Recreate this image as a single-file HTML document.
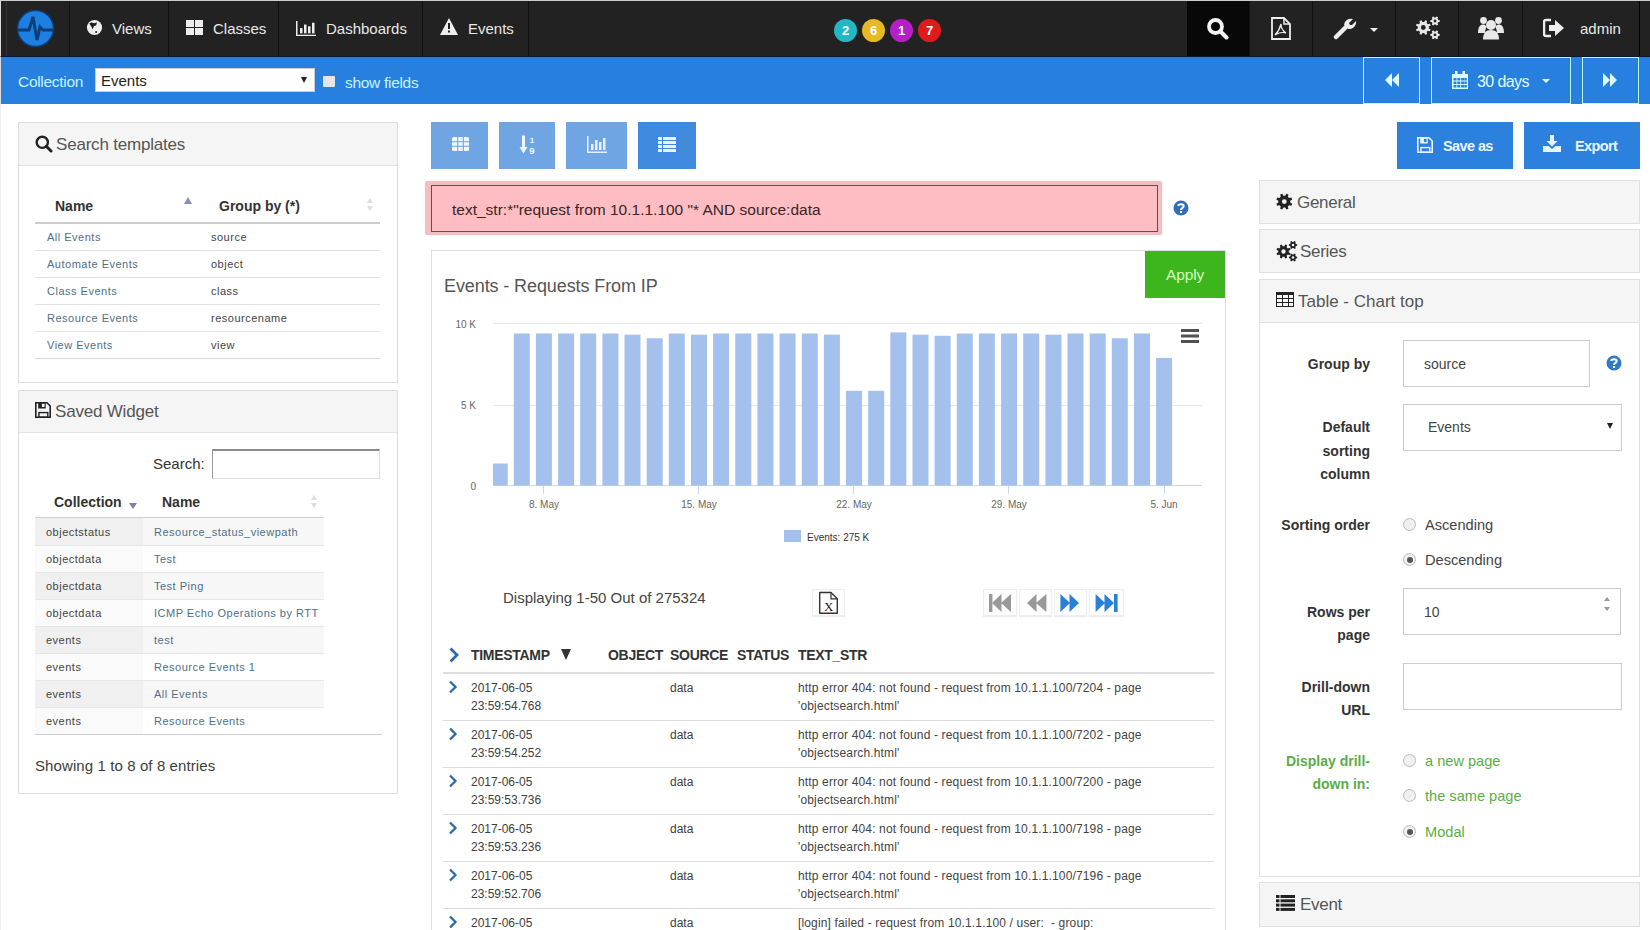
<!DOCTYPE html>
<html><head><meta charset="utf-8">
<style>
*{box-sizing:border-box;margin:0;padding:0}
html,body{width:1650px;height:930px;overflow:hidden;background:#fff;font-family:"Liberation Sans",sans-serif;color:#333;position:relative}
.a{position:absolute}
.t{position:absolute;white-space:nowrap;line-height:1}
.ttl{color:#595959}
#nav{left:0;top:0;width:1650px;height:57px;background:#222;border-top:1px solid #ccc;border-left:1px solid #ddd}
.sep{position:absolute;top:1px;width:1px;height:55px;background:#111}
.navt{color:#e8e8e8;font-size:15px}
#bar{left:0;top:56px;width:1650px;height:48px;background:#2780e0;border-left:1px solid #ddd;border-top:1px solid #061a38}
.bbtn{position:absolute;top:57px;height:47px;border:1px solid #bdf2ff;background:#2780e0}
.panel{position:absolute;border:1px solid #ddd;background:#fff}
.phead{position:absolute;left:0;top:0;right:0;background:#f5f5f5;border-bottom:1px solid #ddd}
.sm{font-size:11px;letter-spacing:0.5px;color:#444;margin-top:1px}
.lnk{color:#4f7088}
</style></head><body>
<div class="a" style="left:0;top:0;width:1px;height:930px;background:#f0f0f0"></div>
<!-- NAVBAR -->
<div id="nav" class="a"></div>
<div class="sep" style="left:6px;background:#333"></div>
<div class="sep" style="left:69px"></div>
<div class="sep" style="left:168px"></div>
<div class="sep" style="left:278px"></div>
<div class="sep" style="left:422px"></div>
<div class="sep" style="left:528px"></div>
<div class="a" style="left:1187px;top:1px;width:62px;height:55px;background:#080808"></div>
<div class="sep" style="left:1249px"></div>
<div class="sep" style="left:1312px"></div>
<div class="sep" style="left:1395px"></div>
<div class="sep" style="left:1458px"></div>
<div class="sep" style="left:1522px"></div>
<div class="sep" style="left:1639px;background:#000"></div>
<!-- logo -->
<svg class="a" style="left:16px;top:9px" width="40" height="40" viewBox="0 0 40 40">
<circle cx="19.5" cy="19.5" r="18" fill="#1d7fe0" stroke="#0b3f7a" stroke-width="1.5"/>
<path d="M2 21 H13 L17 8 L21 31 L24 18 L27 21 H37" fill="none" stroke="#0d3d78" stroke-width="3" stroke-linejoin="miter"/>
</svg>
<!-- globe -->
<svg class="a" style="left:86px;top:19px" width="17" height="17" viewBox="0 0 17 17">
<circle cx="8.5" cy="8.5" r="7.6" fill="#eee"/>
<path d="M3.3 4.6 L5.5 3.4 L8 4.3 L11 3.6 L10.2 6.2 L7.8 7.2 L6.6 10.4 L5.6 8 Z" fill="#1a1a1a"/><circle cx="10.1" cy="13" r="1" fill="#1a1a1a"/></svg>
<div class="t navt" style="left:112px;top:20.8px">Views</div>
<svg class="a" style="left:186px;top:20px" width="17" height="15" viewBox="0 0 17 15">
<rect x="0" y="0" width="8" height="7" fill="#eee"/><rect x="9" y="0" width="8" height="7" fill="#eee"/>
<rect x="0" y="8" width="8" height="7" fill="#eee"/><rect x="9" y="8" width="8" height="7" fill="#eee"/>
</svg>
<div class="t navt" style="left:213px;top:20.8px">Classes</div>
<svg class="a" style="left:296px;top:20.5px" width="20" height="15" viewBox="0 0 20 17" preserveAspectRatio="none">
<path d="M0 0 V17 H20 V15.5 H1.5 V0 Z" fill="#eee"/>
<rect x="4" y="8" width="2.5" height="6" fill="#eee"/><rect x="8" y="4" width="2.5" height="10" fill="#eee"/>
<rect x="12" y="6" width="2.5" height="8" fill="#eee"/><rect x="16" y="2" width="2.5" height="12" fill="#eee"/>
</svg>
<div class="t navt" style="left:326px;top:20.8px">Dashboards</div>
<svg class="a" style="left:440px;top:18px" width="18" height="17" viewBox="0 0 18 17">
<path d="M9 0 L18 17 H0 Z" fill="#eee"/><rect x="8" y="5" width="2" height="6" fill="#222"/><rect x="8" y="12.5" width="2" height="2" fill="#222"/>
</svg>
<div class="t navt" style="left:468px;top:20.8px">Events</div>
<!-- badges -->
<div class="a" style="left:834px;top:19px;width:23px;height:23px;border-radius:50%;background:#21b8c4"></div>
<div class="a" style="left:862px;top:19px;width:23px;height:23px;border-radius:50%;background:#e7b925"></div>
<div class="a" style="left:890px;top:19px;width:23px;height:23px;border-radius:50%;background:#b41fc6"></div>
<div class="a" style="left:918px;top:19px;width:23px;height:23px;border-radius:50%;background:#de1c1c"></div>
<div class="t" style="left:834px;top:24px;width:23px;text-align:center;color:#fff;font-size:13px;font-weight:bold">2</div>
<div class="t" style="left:862px;top:24px;width:23px;text-align:center;color:#fff;font-size:13px;font-weight:bold">6</div>
<div class="t" style="left:890px;top:24px;width:23px;text-align:center;color:#fff;font-size:13px;font-weight:bold">1</div>
<div class="t" style="left:918px;top:24px;width:23px;text-align:center;color:#fff;font-size:13px;font-weight:bold">7</div>
<!-- right nav icons -->
<svg class="a" style="left:1206px;top:17px" width="23" height="23" viewBox="0 0 23 23">
<circle cx="9.5" cy="9.5" r="6.5" fill="none" stroke="#f2f2f2" stroke-width="3.8"/>
<path d="M14.5 14.5 L20.5 20.5" stroke="#f2f2f2" stroke-width="4" stroke-linecap="round"/>
</svg>
<svg class="a" style="left:1271px;top:17px" width="20" height="23" viewBox="0 0 20 23">
<path d="M1 1 H13 L19 7 V22 H1 Z" fill="none" stroke="#eee" stroke-width="1.8"/>
<path d="M13 1 V7 H19" fill="none" stroke="#eee" stroke-width="1.5"/>
<path d="M10 7 C9 11 7 15 4 18 C7 16 12 15 15 16 C12 14 10 10 10 7 Z" fill="none" stroke="#eee" stroke-width="1.3"/>
</svg>
<svg class="a" style="left:1333px;top:17px" width="24" height="23" viewBox="0 0 24 23">
<path d="M3 20 L12 11" stroke="#eee" stroke-width="4.5" stroke-linecap="round"/>
<path d="M11 8 A7 7 0 0 1 20 2 L16 6 L17 8 L19 8 L23 4 A7 7 0 0 1 15 12 Z" fill="#eee"/>
</svg>
<div class="a" style="left:1370px;top:28px;width:0;height:0;border-left:4px solid transparent;border-right:4px solid transparent;border-top:4px solid #eee"></div>
<svg class="a" style="left:1415px;top:15px" width="28" height="28" viewBox="0 0 28 28"><path fill="#e8e8e8" fill-rule="evenodd" d="M13.83 13.38 L15.66 14.39 L14.84 16.37 L12.83 15.79 L11.59 17.03 L12.17 19.04 L10.19 19.86 L9.18 18.03 L7.42 18.03 L6.41 19.86 L4.43 19.04 L5.01 17.03 L3.77 15.79 L1.76 16.37 L0.94 14.39 L2.77 13.38 L2.77 11.62 L0.94 10.61 L1.76 8.63 L3.77 9.21 L5.01 7.97 L4.43 5.96 L6.41 5.14 L7.42 6.97 L9.18 6.97 L10.19 5.14 L12.17 5.96 L11.59 7.97 L12.83 9.21 L14.84 8.63 L15.66 10.61 L13.83 11.62 Z M5.90 12.50 a2.40 2.40 0 1 0 4.80 0 a2.40 2.40 0 1 0 -4.80 0 Z M23.33 4.92 L24.71 5.10 L24.71 6.90 L23.33 7.08 L22.60 8.34 L23.14 9.63 L21.58 10.53 L20.73 9.42 L19.27 9.42 L18.42 10.53 L16.86 9.63 L17.40 8.34 L16.67 7.08 L15.29 6.90 L15.29 5.10 L16.67 4.92 L17.40 3.66 L16.86 2.37 L18.42 1.47 L19.27 2.58 L20.73 2.58 L21.58 1.47 L23.14 2.37 L22.60 3.66 Z M18.60 6.00 a1.40 1.40 0 1 0 2.80 0 a1.40 1.40 0 1 0 -2.80 0 Z M23.33 18.72 L24.71 18.90 L24.71 20.70 L23.33 20.88 L22.60 22.14 L23.14 23.43 L21.58 24.33 L20.73 23.22 L19.27 23.22 L18.42 24.33 L16.86 23.43 L17.40 22.14 L16.67 20.88 L15.29 20.70 L15.29 18.90 L16.67 18.72 L17.40 17.46 L16.86 16.17 L18.42 15.27 L19.27 16.38 L20.73 16.38 L21.58 15.27 L23.14 16.17 L22.60 17.46 Z M18.60 19.80 a1.40 1.40 0 1 0 2.80 0 a1.40 1.40 0 1 0 -2.80 0 Z"/></svg>
<svg class="a" style="left:1478px;top:16px" width="26" height="24" viewBox="0 0 26 24"><g fill="#e8e8e8">
<circle cx="5.5" cy="4.5" r="3.4"/><circle cx="20.5" cy="4.5" r="3.4"/><circle cx="13" cy="9" r="5"/>
<path d="M0 17 C0 11 2 8.5 5.5 8.5 C7 8.5 8 9.5 8.5 11 C7.5 13 7 15 7 17 Z M19 17 C19 15 18.5 13 17.5 11 C18 9.5 19 8.5 20.5 8.5 C24 8.5 26 11 26 17 Z"/>
<path d="M5 23.5 C5 17 8 14 13 14 C18 14 21 17 21 23.5 Z"/></g></svg>
<svg class="a" style="left:1543px;top:18px" width="22" height="20" viewBox="0 0 22 20">
<path d="M8 2 H3 Q1 2 1 4 V16 Q1 18 3 18 H8" fill="none" stroke="#eee" stroke-width="2.5"/>
<path d="M6 7 H12 V2 L21 10 L12 18 V13 H6 Z" fill="#eee"/>
</svg>
<div class="t navt" style="left:1580px;top:20.8px">admin</div>
<!-- BLUE BAR -->
<div id="bar" class="a"></div>
<div class="t" style="left:18px;top:73.5px;color:#c4f4ff;font-size:15.5px;letter-spacing:-0.3px">Collection</div>
<div class="a" style="left:95px;top:68px;width:220px;height:24px;background:#fff;border:1px solid #ccc"></div>
<div class="t" style="left:101px;top:73px;color:#222;font-size:15px">Events</div>
<div class="a" style="left:301px;top:77px;width:0;height:0;border-left:3.5px solid transparent;border-right:3.5px solid transparent;border-top:6px solid #222"></div>
<div class="a" style="left:323px;top:76px;width:12px;height:11px;background:#e6e6e6;border-radius:1px"></div>
<div class="t" style="left:345px;top:74.5px;color:#c4f4ff;font-size:15.5px;letter-spacing:-0.3px">show fields</div>
<div class="bbtn" style="left:1363px;width:57px"></div>
<div class="bbtn" style="left:1431px;width:140px"></div>
<div class="bbtn" style="left:1582px;width:57px"></div>
<svg class="a" style="left:1384px;top:72px" width="16" height="16" viewBox="0 0 16 16"><path d="M8 1 L1 8 L8 15 Z M15 1 L8 8 L15 15 Z" fill="#dff"/></svg>
<svg class="a" style="left:1602px;top:72px" width="16" height="16" viewBox="0 0 16 16"><path d="M1 1 L8 8 L1 15 Z M8 1 L15 8 L8 15 Z" fill="#dff"/></svg>
<svg class="a" style="left:1452px;top:71px" width="16" height="18" viewBox="0 0 16 18"><path d="M0 3 H16 V18 H0 Z" fill="#dff"/><rect x="3" y="0" width="2.5" height="5" fill="#dff"/><rect x="10.5" y="0" width="2.5" height="5" fill="#dff"/>
<g fill="#2780e0"><rect x="1.5" y="7" width="3" height="2.5"/><rect x="5.3" y="7" width="3" height="2.5"/><rect x="9.1" y="7" width="3" height="2.5"/><rect x="12.3" y="7" width="2.5" height="2.5"/>
<rect x="1.5" y="10.5" width="3" height="2.5"/><rect x="5.3" y="10.5" width="3" height="2.5"/><rect x="9.1" y="10.5" width="3" height="2.5"/><rect x="12.3" y="10.5" width="2.5" height="2.5"/>
<rect x="1.5" y="14" width="3" height="2.5"/><rect x="5.3" y="14" width="3" height="2.5"/><rect x="9.1" y="14" width="3" height="2.5"/><rect x="12.3" y="14" width="2.5" height="2.5"/></g></svg>
<div class="t" style="left:1477px;top:73.5px;color:#e0fbff;font-size:16px;letter-spacing:-0.6px">30 days</div>
<div class="a" style="left:1542px;top:79px;width:0;height:0;border-left:4px solid transparent;border-right:4px solid transparent;border-top:4px solid #dff"></div>
<!-- LEFT PANEL 1 -->
<div class="panel" style="left:18px;top:122px;width:380px;height:261px"></div>
<div class="a" style="left:19px;top:123px;width:378px;height:43px;background:#f5f5f5;border-bottom:1px solid #e3e3e3"></div>
<svg class="a" style="left:35px;top:135px" width="18" height="18" viewBox="0 0 18 18">
<circle cx="7.3" cy="7.3" r="5.6" fill="none" stroke="#222" stroke-width="2.4"/><path d="M11.3 11.3 L16 16" stroke="#222" stroke-width="3" stroke-linecap="round"/></svg>
<div class="t" style="left:56px;top:136px;color:#555;font-size:17px;letter-spacing:-0.2px">Search templates</div>
<div class="t" style="left:55px;top:199px;color:#333;font-size:14px;font-weight:bold">Name</div>
<div class="a" style="left:184px;top:197px;width:0;height:0;border-left:4.5px solid transparent;border-right:4.5px solid transparent;border-bottom:7px solid #8a8fb5"></div>
<div class="t" style="left:219px;top:199px;color:#333;font-size:14px;font-weight:bold">Group by (*)</div>
<div class="a" style="left:367px;top:198px;width:0;height:0;border-left:3.5px solid transparent;border-right:3.5px solid transparent;border-bottom:5px solid #ddd"></div>
<div class="a" style="left:367px;top:206px;width:0;height:0;border-left:3.5px solid transparent;border-right:3.5px solid transparent;border-top:5px solid #ddd"></div>
<div class="a" style="left:35px;top:222px;width:345px;height:2px;background:#ccc"></div>
<div class="a" style="left:35px;top:250px;width:345px;height:1px;background:#e2e2e2"></div>
<div class="a" style="left:35px;top:277px;width:345px;height:1px;background:#e2e2e2"></div>
<div class="a" style="left:35px;top:304px;width:345px;height:1px;background:#e2e2e2"></div>
<div class="a" style="left:35px;top:331px;width:345px;height:1px;background:#e2e2e2"></div>
<div class="a" style="left:35px;top:358px;width:345px;height:1px;background:#d8d8d8"></div>
<div class="t sm lnk" style="left:47px;top:231px">All Events</div>
<div class="t sm lnk" style="left:47px;top:258px">Automate Events</div>
<div class="t sm lnk" style="left:47px;top:285px">Class Events</div>
<div class="t sm lnk" style="left:47px;top:312px">Resource Events</div>
<div class="t sm lnk" style="left:47px;top:339px">View Events</div>
<div class="t sm" style="left:211px;top:231px;">source</div>
<div class="t sm" style="left:211px;top:258px;">object</div>
<div class="t sm" style="left:211px;top:285px;">class</div>
<div class="t sm" style="left:211px;top:312px;">resourcename</div>
<div class="t sm" style="left:211px;top:339px;">view</div>
<!-- LEFT PANEL 2 -->
<div class="panel" style="left:18px;top:390px;width:380px;height:404px"></div>
<div class="a" style="left:19px;top:391px;width:378px;height:42px;background:#f5f5f5;border-bottom:1px solid #e3e3e3"></div>
<svg class="a" style="left:35px;top:402px" width="16" height="16" viewBox="0 0 16 16">
<path d="M0.8 0.8 H12 L15.2 4 V15.2 H0.8 Z" fill="none" stroke="#222" stroke-width="1.6"/>
<path d="M3.2 0.8 H10.7 V6.5 H3.2 Z M6.9 1.6 V4.9 H9.6 V1.6 Z" fill="#222" fill-rule="evenodd"/>
<rect x="3.9" y="10.6" width="8.9" height="4.6" fill="none" stroke="#222" stroke-width="1.4"/></svg>
<div class="t" style="left:55px;top:403px;color:#555;font-size:17px;letter-spacing:-0.2px">Saved Widget</div>
<div class="t" style="left:153px;top:456px;color:#333;font-size:15px">Search:</div>
<div class="a" style="left:212px;top:449px;width:168px;height:30px;border:1px solid #ddd;border-top:2px solid #8a8a8a;border-left-color:#999"></div>
<div class="t" style="left:54px;top:495px;color:#333;font-size:14px;font-weight:bold">Collection</div>
<div class="a" style="left:129px;top:503px;width:0;height:0;border-left:4px solid transparent;border-right:4px solid transparent;border-top:6px solid #7a80aa"></div>
<div class="t" style="left:162px;top:495px;color:#333;font-size:14px;font-weight:bold">Name</div>
<div class="a" style="left:311px;top:495px;width:0;height:0;border-left:3.5px solid transparent;border-right:3.5px solid transparent;border-bottom:5px solid #ddd"></div>
<div class="a" style="left:311px;top:503px;width:0;height:0;border-left:3.5px solid transparent;border-right:3.5px solid transparent;border-top:5px solid #ddd"></div>
<div class="a" style="left:35px;top:517px;width:289px;height:1px;background:#d0d0d0"></div>
<div class="a" style="left:35px;top:518px;width:289px;height:27px;background:#f7f7f7"></div>
<div class="a" style="left:35px;top:518px;width:108px;height:27px;background:#f0f0f0"></div>
<div class="a" style="left:35px;top:545px;width:108px;height:27px;background:#fafafa"></div>
<div class="a" style="left:35px;top:572px;width:289px;height:27px;background:#f7f7f7"></div>
<div class="a" style="left:35px;top:572px;width:108px;height:27px;background:#f0f0f0"></div>
<div class="a" style="left:35px;top:599px;width:108px;height:27px;background:#fafafa"></div>
<div class="a" style="left:35px;top:626px;width:289px;height:27px;background:#f7f7f7"></div>
<div class="a" style="left:35px;top:626px;width:108px;height:27px;background:#f0f0f0"></div>
<div class="a" style="left:35px;top:653px;width:108px;height:27px;background:#fafafa"></div>
<div class="a" style="left:35px;top:680px;width:289px;height:27px;background:#f7f7f7"></div>
<div class="a" style="left:35px;top:680px;width:108px;height:27px;background:#f0f0f0"></div>
<div class="a" style="left:35px;top:707px;width:108px;height:27px;background:#fafafa"></div>
<div class="a" style="left:35px;top:545px;width:289px;height:1px;background:#e6e6e6"></div>
<div class="a" style="left:35px;top:572px;width:289px;height:1px;background:#e6e6e6"></div>
<div class="a" style="left:35px;top:599px;width:289px;height:1px;background:#e6e6e6"></div>
<div class="a" style="left:35px;top:626px;width:289px;height:1px;background:#e6e6e6"></div>
<div class="a" style="left:35px;top:653px;width:289px;height:1px;background:#e6e6e6"></div>
<div class="a" style="left:35px;top:680px;width:289px;height:1px;background:#e6e6e6"></div>
<div class="a" style="left:35px;top:707px;width:289px;height:1px;background:#e6e6e6"></div>
<div class="a" style="left:35px;top:734px;width:347px;height:1px;background:#ccc"></div>
<div class="t sm" style="left:46px;top:526px;">objectstatus</div>
<div class="t sm" style="left:46px;top:553px;">objectdata</div>
<div class="t sm" style="left:46px;top:580px;">objectdata</div>
<div class="t sm" style="left:46px;top:607px;">objectdata</div>
<div class="t sm" style="left:46px;top:634px;">events</div>
<div class="t sm" style="left:46px;top:661px;">events</div>
<div class="t sm" style="left:46px;top:688px;">events</div>
<div class="t sm" style="left:46px;top:715px;">events</div>
<div class="t sm lnk" style="left:154px;top:526px">Resource_status_viewpath</div>
<div class="t sm lnk" style="left:154px;top:553px">Test</div>
<div class="t sm lnk" style="left:154px;top:580px">Test Ping</div>
<div class="t sm lnk" style="left:154px;top:607px">ICMP Echo Operations by RTT</div>
<div class="t sm lnk" style="left:154px;top:634px">test</div>
<div class="t sm lnk" style="left:154px;top:661px">Resource Events 1</div>
<div class="t sm lnk" style="left:154px;top:688px">All Events</div>
<div class="t sm lnk" style="left:154px;top:715px">Resource Events</div>
<div class="t" style="left:35px;top:758px;color:#3d3d3d;font-size:15px;letter-spacing:0.1px">Showing 1 to 8 of 8 entries</div>
<!-- TOOLBAR -->
<div class="a" style="left:431px;top:122px;width:57px;height:47px;background:#6ea5e2"></div>
<div class="a" style="left:499px;top:122px;width:56px;height:47px;background:#6ea5e2"></div>
<div class="a" style="left:566px;top:122px;width:61px;height:47px;background:#6ea5e2"></div>
<div class="a" style="left:638px;top:122px;width:58px;height:47px;background:#3f8ade"></div>
<svg class="a" style="left:452px;top:137px" width="17" height="14" viewBox="0 0 17 14">
<rect x="0" y="0" width="17" height="14" rx="1.5" fill="#eef6ff"/>
<path d="M0 4.7 H17 M0 9.3 H17 M5.7 0 V14 M11.3 0 V14" stroke="#6ea5e2" stroke-width="1.1"/></svg>
<svg class="a" style="left:519px;top:135px" width="18" height="20" viewBox="0 0 18 20">
<path d="M4.5 0.5 V14" stroke="#eef6ff" stroke-width="3"/><path d="M0.5 12 L4.5 18.5 L8.5 12 Z" fill="#eef6ff"/>
<text x="13" y="8" font-size="8" font-weight="bold" fill="#eef6ff" font-family="Liberation Sans" text-anchor="middle">1</text>
<text x="13" y="18.5" font-size="9.5" font-weight="bold" fill="#eef6ff" font-family="Liberation Sans" text-anchor="middle">9</text></svg>
<svg class="a" style="left:587px;top:136px" width="20" height="17" viewBox="0 0 20 17">
<path d="M0 0 V17 H20 V15.5 H1.5 V0 Z" fill="#e8f2ff"/>
<rect x="4" y="8" width="2.5" height="6" fill="#e8f2ff"/><rect x="8" y="4" width="2.5" height="10" fill="#e8f2ff"/>
<rect x="12" y="6" width="2.5" height="8" fill="#e8f2ff"/><rect x="16" y="2" width="2.5" height="12" fill="#e8f2ff"/></svg>
<svg class="a" style="left:658px;top:137px" width="18" height="15" viewBox="0 0 18 15">
<g fill="#e8f2ff"><rect x="0" y="0" width="4" height="3"/><rect x="5" y="0" width="13" height="3"/>
<rect x="0" y="4" width="4" height="3"/><rect x="5" y="4" width="13" height="3"/>
<rect x="0" y="8" width="4" height="3"/><rect x="5" y="8" width="13" height="3"/>
<rect x="0" y="12" width="4" height="3"/><rect x="5" y="12" width="13" height="3"/></g></svg>
<!-- QUERY -->
<div class="a" style="left:425px;top:180.5px;width:737px;height:54px;background:#f2bfc1;border-radius:3px;box-shadow:0 0 1px #e8b0b0"></div>
<div class="a" style="left:431px;top:185px;width:727px;height:47px;background:#fdbdc2;border:1px solid #704646"></div>
<div class="t" style="left:452px;top:202px;color:#3a2626;font-size:15.5px;letter-spacing:0px">text_str:*"request from 10.1.1.100 "* AND source:data</div>
<svg class="a" style="left:1173px;top:200px" width="16" height="16" viewBox="0 0 16 16">
<circle cx="8" cy="8" r="7.5" fill="#2f6fba"/>
<path d="M5.3 6 C5.3 3.5 10.7 3.5 10.7 6 C10.7 8 8 8 8 10" fill="none" stroke="#fff" stroke-width="2"/>
<rect x="7" y="11" width="2" height="2" fill="#fff"/></svg>
<!-- CHART PANEL -->
<div class="a" style="left:431px;top:250px;width:795px;height:700px;border:1px solid #ddd;border-bottom:none"></div>
<div class="a" style="left:1145px;top:251px;width:80px;height:47px;background:#3db51c;border:1px solid #4ea83a"></div>
<div class="t" style="left:1166px;top:266.5px;color:#d4ffc4;font-size:15.5px;letter-spacing:-0.1px">Apply</div>
<div class="t" style="left:444px;top:277px;color:#555;font-size:18px;letter-spacing:-0.1px">Events - Requests From IP</div>
<svg class="a" style="left:0;top:0" width="1650" height="560" viewBox="0 0 1650 560">
<g font-family="Liberation Sans" font-size="10" fill="#666">
<text x="476" y="327.5" text-anchor="end">10 K</text>
<text x="476" y="409" text-anchor="end">5 K</text>
<text x="476" y="489.5" text-anchor="end">0</text>
</g>
<path d="M493 323.5 H1202 M493 405.5 H1202" stroke="#e6e6e6" stroke-width="1"/>
<path d="M493 485.5 H1202" stroke="#ccd6eb" stroke-width="1"/>
<path d="M543.5 486 V494 M698.5 486 V494 M853.5 486 V494 M1008.5 486 V494 M1164.5 486 V494" stroke="#ccd6eb" stroke-width="1"/>
<g fill="#a3c1ec">
<rect x="493.0" y="463.5" width="14.7" height="22.0"/><rect x="513.8" y="333.5" width="16.0" height="152.0"/><rect x="535.9" y="333.5" width="16.0" height="152.0"/><rect x="558.1" y="333.5" width="16.0" height="152.0"/><rect x="580.2" y="333.5" width="16.0" height="152.0"/><rect x="602.4" y="333.5" width="16.0" height="152.0"/><rect x="624.5" y="334.7" width="16.0" height="150.8"/><rect x="646.7" y="338.3" width="16.0" height="147.2"/><rect x="668.8" y="333.5" width="16.0" height="152.0"/><rect x="691.0" y="334.7" width="16.0" height="150.8"/><rect x="713.1" y="333.5" width="16.0" height="152.0"/><rect x="735.3" y="333.5" width="16.0" height="152.0"/><rect x="757.4" y="333.5" width="16.0" height="152.0"/><rect x="779.6" y="333.5" width="16.0" height="152.0"/><rect x="801.8" y="333.5" width="16.0" height="152.0"/><rect x="823.9" y="334.7" width="16.0" height="150.8"/><rect x="846.0" y="390.8" width="16.0" height="94.7"/><rect x="868.2" y="390.8" width="16.0" height="94.7"/><rect x="890.3" y="332.4" width="16.0" height="153.1"/><rect x="912.5" y="334.7" width="16.0" height="150.8"/><rect x="934.6" y="335.8" width="16.0" height="149.7"/><rect x="956.8" y="333.5" width="16.0" height="152.0"/><rect x="978.9" y="333.5" width="16.0" height="152.0"/><rect x="1001.1" y="333.5" width="16.0" height="152.0"/><rect x="1023.2" y="333.5" width="16.0" height="152.0"/><rect x="1045.4" y="334.7" width="16.0" height="150.8"/><rect x="1067.5" y="333.5" width="16.0" height="152.0"/><rect x="1089.7" y="333.5" width="16.0" height="152.0"/><rect x="1111.8" y="338.3" width="16.0" height="147.2"/><rect x="1134.0" y="333.5" width="16.0" height="152.0"/><rect x="1156.1" y="357.9" width="16.0" height="127.6"/>
</g>
<g font-family="Liberation Sans" font-size="10" fill="#666" text-anchor="middle">
<text x="544" y="507.5">8. May</text>
<text x="699" y="507.5">15. May</text>
<text x="854" y="507.5">22. May</text>
<text x="1009" y="507.5">29. May</text>
<text x="1164" y="507.5">5. Jun</text>
</g>
<rect x="784" y="530" width="17" height="12" fill="#a3c1ec"/>
<text x="807" y="541" font-family="Liberation Sans" font-size="10" fill="#333">Events: 275 K</text>
<path d="M1181 330.5 H1199 M1181 336 H1199 M1181 341.5 H1199" stroke="#505050" stroke-width="3"/>
</svg>
<!-- PAGINATION -->
<div class="t" style="left:503px;top:590px;color:#444;font-size:15px">Displaying 1-50 Out of 275324</div>
<div class="a" style="left:812px;top:589px;width:33px;height:27px;border:1px solid #eee;background:#fdfdfd;box-shadow:0 1px 1px #eee"></div>
<svg class="a" style="left:818px;top:591px" width="22" height="24" viewBox="0 0 22 24">
<path d="M1.7 1.5 H13 L19.3 7.8 V22.3 H1.7 Z" fill="#fff" stroke="#333" stroke-width="1.4" stroke-linejoin="round"/><path d="M13 1.5 V7.8 H19.3" fill="none" stroke="#333" stroke-width="1.2"/>
<text x="10.7" y="19.5" font-family="Liberation Serif" font-size="13" fill="#222" text-anchor="middle">X</text></svg>
<div class="a" style="left:983px;top:589px;width:34px;height:27px;border:1px solid #eee;background:#fdfdfd;box-shadow:0 1px 1px #eee"></div>
<div class="a" style="left:1019px;top:589px;width:33px;height:27px;border:1px solid #eee;background:#fdfdfd;box-shadow:0 1px 1px #eee"></div>
<div class="a" style="left:1054px;top:589px;width:33px;height:27px;border:1px solid #eee;background:#fdfdfd;box-shadow:0 1px 1px #eee"></div>
<div class="a" style="left:1089px;top:589px;width:35px;height:27px;border:1px solid #eee;background:#fdfdfd;box-shadow:0 1px 1px #eee"></div>
<svg class="a" style="left:983px;top:589px" width="142" height="27" viewBox="0 0 142 27">
<g fill="#999"><rect x="6" y="5" width="3.4" height="18"/><path d="M9 14 L18.5 5 V23 Z M18 14 L28 5 V23 Z"/>
<path d="M44 14 L53.5 5 V23 Z M53 14 L63.4 5 V23 Z"/></g>
<g fill="#2a7fd6"><path d="M77.4 5 L87 14 L77.4 23 Z M86.5 5 L96 14 L86.5 23 Z"/>
<path d="M112.6 5 L122 14 L112.6 23 Z M121.5 5 L131 14 L121.5 23 Z"/><rect x="131" y="5" width="3.6" height="18"/></g></svg>
<!-- TABLE HEADER -->
<svg class="a" style="left:448px;top:647px" width="12" height="16" viewBox="0 0 12 16"><path d="M2.5 1.5 L9 8 L2.5 14.5" fill="none" stroke="#2f6aa8" stroke-width="2.8"/></svg>
<div class="t" style="left:471px;top:648px;color:#333;font-size:14px;font-weight:bold;letter-spacing:-0.3px">TIMESTAMP</div>
<div class="a" style="left:561px;top:649px;width:0;height:0;border-left:5.5px solid transparent;border-right:5.5px solid transparent;border-top:11px solid #333"></div>
<div class="t" style="left:608px;top:648px;color:#333;font-size:14px;font-weight:bold;letter-spacing:-0.3px">OBJECT</div>
<div class="t" style="left:670px;top:648px;color:#333;font-size:14px;font-weight:bold;letter-spacing:-0.3px">SOURCE</div>
<div class="t" style="left:737px;top:648px;color:#333;font-size:14px;font-weight:bold;letter-spacing:-0.3px">STATUS</div>
<div class="t" style="left:798px;top:648px;color:#333;font-size:14px;font-weight:bold;letter-spacing:-0.3px">TEXT_STR</div>
<div class="a" style="left:443px;top:672px;width:771px;height:2px;background:#ddd"></div>
<svg class="a" style="left:448px;top:680px" width="10" height="14" viewBox="0 0 10 14"><path d="M2 1.5 L7.5 7 L2 12.5" fill="none" stroke="#2f6aa8" stroke-width="2.3"/></svg>
<div class="t" style="left:471px;top:682px;color:#404040;font-size:12px">2017-06-05</div>
<div class="t" style="left:471px;top:700px;color:#404040;font-size:12px">23:59:54.768</div>
<div class="t" style="left:670px;top:682px;color:#404040;font-size:12px">data</div>
<div class="t" style="left:798px;top:682px;color:#444;font-size:12px;letter-spacing:0.15px">http error 404: not found - request from 10.1.1.100/7204 - page</div>
<div class="t" style="left:798px;top:700px;color:#444;font-size:12px;letter-spacing:0.15px">'objectsearch.html'</div>
<div class="a" style="left:443px;top:720px;width:771px;height:1px;background:#ddd"></div>
<svg class="a" style="left:448px;top:727px" width="10" height="14" viewBox="0 0 10 14"><path d="M2 1.5 L7.5 7 L2 12.5" fill="none" stroke="#2f6aa8" stroke-width="2.3"/></svg>
<div class="t" style="left:471px;top:729px;color:#404040;font-size:12px">2017-06-05</div>
<div class="t" style="left:471px;top:747px;color:#404040;font-size:12px">23:59:54.252</div>
<div class="t" style="left:670px;top:729px;color:#404040;font-size:12px">data</div>
<div class="t" style="left:798px;top:729px;color:#444;font-size:12px;letter-spacing:0.15px">http error 404: not found - request from 10.1.1.100/7202 - page</div>
<div class="t" style="left:798px;top:747px;color:#444;font-size:12px;letter-spacing:0.15px">'objectsearch.html'</div>
<div class="a" style="left:443px;top:767px;width:771px;height:1px;background:#ddd"></div>
<svg class="a" style="left:448px;top:774px" width="10" height="14" viewBox="0 0 10 14"><path d="M2 1.5 L7.5 7 L2 12.5" fill="none" stroke="#2f6aa8" stroke-width="2.3"/></svg>
<div class="t" style="left:471px;top:776px;color:#404040;font-size:12px">2017-06-05</div>
<div class="t" style="left:471px;top:794px;color:#404040;font-size:12px">23:59:53.736</div>
<div class="t" style="left:670px;top:776px;color:#404040;font-size:12px">data</div>
<div class="t" style="left:798px;top:776px;color:#444;font-size:12px;letter-spacing:0.15px">http error 404: not found - request from 10.1.1.100/7200 - page</div>
<div class="t" style="left:798px;top:794px;color:#444;font-size:12px;letter-spacing:0.15px">'objectsearch.html'</div>
<div class="a" style="left:443px;top:814px;width:771px;height:1px;background:#ddd"></div>
<svg class="a" style="left:448px;top:821px" width="10" height="14" viewBox="0 0 10 14"><path d="M2 1.5 L7.5 7 L2 12.5" fill="none" stroke="#2f6aa8" stroke-width="2.3"/></svg>
<div class="t" style="left:471px;top:823px;color:#404040;font-size:12px">2017-06-05</div>
<div class="t" style="left:471px;top:841px;color:#404040;font-size:12px">23:59:53.236</div>
<div class="t" style="left:670px;top:823px;color:#404040;font-size:12px">data</div>
<div class="t" style="left:798px;top:823px;color:#444;font-size:12px;letter-spacing:0.15px">http error 404: not found - request from 10.1.1.100/7198 - page</div>
<div class="t" style="left:798px;top:841px;color:#444;font-size:12px;letter-spacing:0.15px">'objectsearch.html'</div>
<div class="a" style="left:443px;top:861px;width:771px;height:1px;background:#ddd"></div>
<svg class="a" style="left:448px;top:868px" width="10" height="14" viewBox="0 0 10 14"><path d="M2 1.5 L7.5 7 L2 12.5" fill="none" stroke="#2f6aa8" stroke-width="2.3"/></svg>
<div class="t" style="left:471px;top:870px;color:#404040;font-size:12px">2017-06-05</div>
<div class="t" style="left:471px;top:888px;color:#404040;font-size:12px">23:59:52.706</div>
<div class="t" style="left:670px;top:870px;color:#404040;font-size:12px">data</div>
<div class="t" style="left:798px;top:870px;color:#444;font-size:12px;letter-spacing:0.15px">http error 404: not found - request from 10.1.1.100/7196 - page</div>
<div class="t" style="left:798px;top:888px;color:#444;font-size:12px;letter-spacing:0.15px">'objectsearch.html'</div>
<div class="a" style="left:443px;top:908px;width:771px;height:1px;background:#ddd"></div>
<svg class="a" style="left:448px;top:915px" width="10" height="14" viewBox="0 0 10 14"><path d="M2 1.5 L7.5 7 L2 12.5" fill="none" stroke="#2f6aa8" stroke-width="2.3"/></svg>
<div class="t" style="left:471px;top:917px;color:#404040;font-size:12px">2017-06-05</div>
<div class="t" style="left:670px;top:917px;color:#404040;font-size:12px">data</div>
<div class="t" style="left:798px;top:917px;color:#444;font-size:12px;letter-spacing:0.15px">[login] failed - request from 10.1.1.100 / user:&nbsp; - group:</div>

<!-- RIGHT COLUMN -->
<div class="a" style="left:1397px;top:122px;width:116px;height:47px;background:#2b81dd"></div>
<div class="a" style="left:1524px;top:122px;width:116px;height:47px;background:#2b81dd"></div>
<svg class="a" style="left:1417px;top:137px" width="16" height="16" viewBox="0 0 16 16">
<path d="M0.8 0.8 H12 L15.2 4 V15.2 H0.8 Z" fill="none" stroke="#e8f4ff" stroke-width="1.6"/>
<path d="M3.2 0.8 H10.7 V6.5 H3.2 Z M6.9 1.6 V4.9 H9.6 V1.6 Z" fill="#e8f4ff" fill-rule="evenodd"/>
<rect x="3.9" y="10.6" width="8.9" height="4.6" fill="none" stroke="#e8f4ff" stroke-width="1.4"/></svg>
<div class="t" style="left:1443px;top:138.5px;color:#eaf4ff;font-size:14.5px;font-weight:bold;letter-spacing:-0.6px">Save as</div>
<svg class="a" style="left:1543px;top:135px" width="18" height="17" viewBox="0 0 18 17">
<path d="M7 0 H11 V6 H14.5 L9 11.5 L3.5 6 H7 Z" fill="#e8f4ff"/><path d="M0 11 H5.5 L9 14 L12.5 11 H18 V17 H0 Z" fill="#e8f4ff"/></svg>
<div class="t" style="left:1575px;top:138.5px;color:#eaf4ff;font-size:14.5px;font-weight:bold;letter-spacing:-0.6px">Export</div>
<!-- General -->
<div class="a" style="left:1259px;top:180px;width:381px;height:44px;background:#f5f5f5;border:1px solid #e0e0e0"></div>
<svg class="a" style="left:1276px;top:193px" width="17" height="17" viewBox="0 0 17 17"><path fill="#222" fill-rule="evenodd" d="M14.23 9.54 L16.24 10.64 L15.36 12.77 L13.15 12.13 L11.83 13.45 L12.47 15.66 L10.34 16.54 L9.24 14.53 L7.36 14.53 L6.26 16.54 L4.13 15.66 L4.77 13.45 L3.45 12.13 L1.24 12.77 L0.36 10.64 L2.37 9.54 L2.37 7.66 L0.36 6.56 L1.24 4.43 L3.45 5.07 L4.77 3.75 L4.13 1.54 L6.26 0.66 L7.36 2.67 L9.24 2.67 L10.34 0.66 L12.47 1.54 L11.83 3.75 L13.15 5.07 L15.36 4.43 L16.24 6.56 L14.23 7.66 Z M5.90 8.60 a2.40 2.40 0 1 0 4.80 0 a2.40 2.40 0 1 0 -4.80 0 Z"/></svg>
<div class="t" style="left:1297px;top:194px;color:#555;font-size:17px;letter-spacing:-0.3px">General</div>
<!-- Series -->
<div class="a" style="left:1259px;top:229px;width:381px;height:44px;background:#f5f5f5;border:1px solid #e0e0e0"></div>
<svg class="a" style="left:1276px;top:240px" width="22" height="22" viewBox="0 0 22 22"><path fill="#222" fill-rule="evenodd" d="M12.73 12.33 L14.47 13.29 L13.70 15.17 L11.79 14.62 L10.62 15.79 L11.17 17.70 L9.29 18.47 L8.33 16.73 L6.67 16.73 L5.71 18.47 L3.83 17.70 L4.38 15.79 L3.21 14.62 L1.30 15.17 L0.53 13.29 L2.27 12.33 L2.27 10.67 L0.53 9.71 L1.30 7.83 L3.21 8.38 L4.38 7.21 L3.83 5.30 L5.71 4.53 L6.67 6.27 L8.33 6.27 L9.29 4.53 L11.17 5.30 L10.62 7.21 L11.79 8.38 L13.70 7.83 L14.47 9.71 L12.73 10.67 Z M5.30 11.50 a2.20 2.20 0 1 0 4.40 0 a2.20 2.20 0 1 0 -4.40 0 Z M19.95 4.04 L21.13 4.21 L21.13 5.79 L19.95 5.96 L19.30 7.07 L19.74 8.18 L18.38 8.97 L17.64 8.03 L16.36 8.03 L15.62 8.97 L14.26 8.18 L14.70 7.07 L14.05 5.96 L12.87 5.79 L12.87 4.21 L14.05 4.04 L14.70 2.93 L14.26 1.82 L15.62 1.03 L16.36 1.97 L17.64 1.97 L18.38 1.03 L19.74 1.82 L19.30 2.93 Z M15.70 5.00 a1.30 1.30 0 1 0 2.60 0 a1.30 1.30 0 1 0 -2.60 0 Z M19.95 16.54 L21.13 16.71 L21.13 18.29 L19.95 18.46 L19.30 19.57 L19.74 20.68 L18.38 21.47 L17.64 20.53 L16.36 20.53 L15.62 21.47 L14.26 20.68 L14.70 19.57 L14.05 18.46 L12.87 18.29 L12.87 16.71 L14.05 16.54 L14.70 15.43 L14.26 14.32 L15.62 13.53 L16.36 14.47 L17.64 14.47 L18.38 13.53 L19.74 14.32 L19.30 15.43 Z M15.70 17.50 a1.30 1.30 0 1 0 2.60 0 a1.30 1.30 0 1 0 -2.60 0 Z"/></svg>
<div class="t" style="left:1300px;top:243px;color:#555;font-size:17px;letter-spacing:-0.3px">Series</div>
<!-- Table - Chart top -->
<div class="a" style="left:1259px;top:279px;width:381px;height:598px;background:#fff;border:1px solid #e0e0e0"></div>
<div class="a" style="left:1260px;top:280px;width:379px;height:43px;background:#f5f5f5;border-bottom:1px solid #e0e0e0"></div>
<svg class="a" style="left:1276px;top:292px" width="18" height="15" viewBox="0 0 18 15" shape-rendering="crispEdges"><g fill="#222">
<rect x="0" y="0" width="18" height="3"/><rect x="0" y="0" width="1.4" height="15"/><rect x="16.6" y="0" width="1.4" height="15"/><rect x="0" y="13.6" width="18" height="1.4"/>
<rect x="0" y="6" width="18" height="1"/><rect x="0" y="10" width="18" height="1"/><rect x="6" y="0" width="1" height="15"/><rect x="11.5" y="0" width="1" height="15"/></g></svg>
<div class="t" style="left:1298px;top:293px;color:#555;font-size:17px;letter-spacing:0px">Table - Chart top</div>
<!-- form -->
<div class="t" style="left:1270px;top:357px;width:100px;text-align:right;color:#333;font-size:14px;font-weight:bold">Group by</div>
<div class="a" style="left:1403px;top:340px;width:187px;height:47px;border:1px solid #ccc"></div>
<div class="t" style="left:1424px;top:357px;color:#444;font-size:14px">source</div>
<svg class="a" style="left:1606px;top:355px" width="16" height="16" viewBox="0 0 16 16">
<circle cx="8" cy="8" r="7.5" fill="#2f7ac4"/>
<path d="M5.3 6 C5.3 3.5 10.7 3.5 10.7 6 C10.7 8 8 8 8 10" fill="none" stroke="#fff" stroke-width="2"/>
<rect x="7" y="11" width="2" height="2" fill="#fff"/></svg>
<div class="t" style="left:1270px;top:420px;width:100px;text-align:right;color:#333;font-size:14px;font-weight:bold">Default</div>
<div class="t" style="left:1270px;top:444px;width:100px;text-align:right;color:#333;font-size:14px;font-weight:bold">sorting</div>
<div class="t" style="left:1270px;top:467px;width:100px;text-align:right;color:#333;font-size:14px;font-weight:bold">column</div>
<div class="a" style="left:1403px;top:404px;width:219px;height:47px;border:1px solid #ccc"></div>
<div class="t" style="left:1428px;top:420px;color:#444;font-size:14px">Events</div>
<div class="a" style="left:1607px;top:423px;width:0;height:0;border-left:3.5px solid transparent;border-right:3.5px solid transparent;border-top:6px solid #222"></div>
<div class="t" style="left:1200px;top:518px;width:170px;text-align:right;color:#333;font-size:14px;font-weight:bold">Sorting order</div>
<div class="a" style="left:1403px;top:518px;width:13px;height:13px;border-radius:50%;border:1px solid #bbb;background:#f0f0f0"></div>
<div class="t" style="left:1425px;top:518px;color:#444;font-size:14.6px">Ascending</div>
<div class="a" style="left:1403px;top:553px;width:13px;height:13px;border-radius:50%;border:1px solid #bbb;background:#f0f0f0"></div>
<div class="a" style="left:1406.5px;top:556.5px;width:6px;height:6px;border-radius:50%;background:#555"></div>
<div class="t" style="left:1425px;top:553px;color:#444;font-size:14.6px">Descending</div>
<div class="t" style="left:1270px;top:605px;width:100px;text-align:right;color:#333;font-size:14px;font-weight:bold">Rows per</div>
<div class="t" style="left:1270px;top:628px;width:100px;text-align:right;color:#333;font-size:14px;font-weight:bold">page</div>
<div class="a" style="left:1403px;top:588px;width:218px;height:47px;border:1px solid #ccc"></div>
<div class="t" style="left:1424px;top:605px;color:#444;font-size:14px">10</div>
<div class="a" style="left:1604px;top:597px;width:0;height:0;border-left:3.5px solid transparent;border-right:3.5px solid transparent;border-bottom:4px solid #999"></div>
<div class="a" style="left:1604px;top:607px;width:0;height:0;border-left:3.5px solid transparent;border-right:3.5px solid transparent;border-top:4px solid #999"></div>
<div class="t" style="left:1270px;top:680px;width:100px;text-align:right;color:#333;font-size:14px;font-weight:bold">Drill-down</div>
<div class="t" style="left:1270px;top:703px;width:100px;text-align:right;color:#333;font-size:14px;font-weight:bold">URL</div>
<div class="a" style="left:1403px;top:663px;width:219px;height:47px;border:1px solid #ccc"></div>
<div class="t" style="left:1270px;top:754px;width:100px;text-align:right;color:#5aae47;font-size:14px;font-weight:bold">Display drill-</div>
<div class="t" style="left:1270px;top:777px;width:100px;text-align:right;color:#5aae47;font-size:14px;font-weight:bold">down in:</div>
<div class="a" style="left:1403px;top:754px;width:13px;height:13px;border-radius:50%;border:1px solid #bbb;background:#f0f0f0"></div>
<div class="t" style="left:1425px;top:754px;color:#5aae47;font-size:14.6px">a new page</div>
<div class="a" style="left:1403px;top:789px;width:13px;height:13px;border-radius:50%;border:1px solid #bbb;background:#f0f0f0"></div>
<div class="t" style="left:1425px;top:789px;color:#5aae47;font-size:14.6px">the same page</div>
<div class="a" style="left:1403px;top:825px;width:13px;height:13px;border-radius:50%;border:1px solid #bbb;background:#f0f0f0"></div>
<div class="a" style="left:1406.5px;top:828.5px;width:6px;height:6px;border-radius:50%;background:#555"></div>
<div class="t" style="left:1425px;top:825px;color:#5aae47;font-size:14.6px">Modal</div>
<!-- Event -->
<div class="a" style="left:1259px;top:882px;width:381px;height:45px;background:#f5f5f5;border:1px solid #e0e0e0"></div>
<svg class="a" style="left:1276px;top:895px" width="19" height="16" viewBox="0 0 19 16">
<g fill="#222"><rect x="0" y="0" width="3.5" height="3"/><rect x="4.5" y="0" width="14.5" height="3"/>
<rect x="0" y="4.3" width="3.5" height="3"/><rect x="4.5" y="4.3" width="14.5" height="3"/>
<rect x="0" y="8.6" width="3.5" height="3"/><rect x="4.5" y="8.6" width="14.5" height="3"/>
<rect x="0" y="12.9" width="3.5" height="3"/><rect x="4.5" y="12.9" width="14.5" height="3"/></g></svg>
<div class="t" style="left:1300px;top:896px;color:#555;font-size:17px;letter-spacing:-0.3px">Event</div>
</body></html>
